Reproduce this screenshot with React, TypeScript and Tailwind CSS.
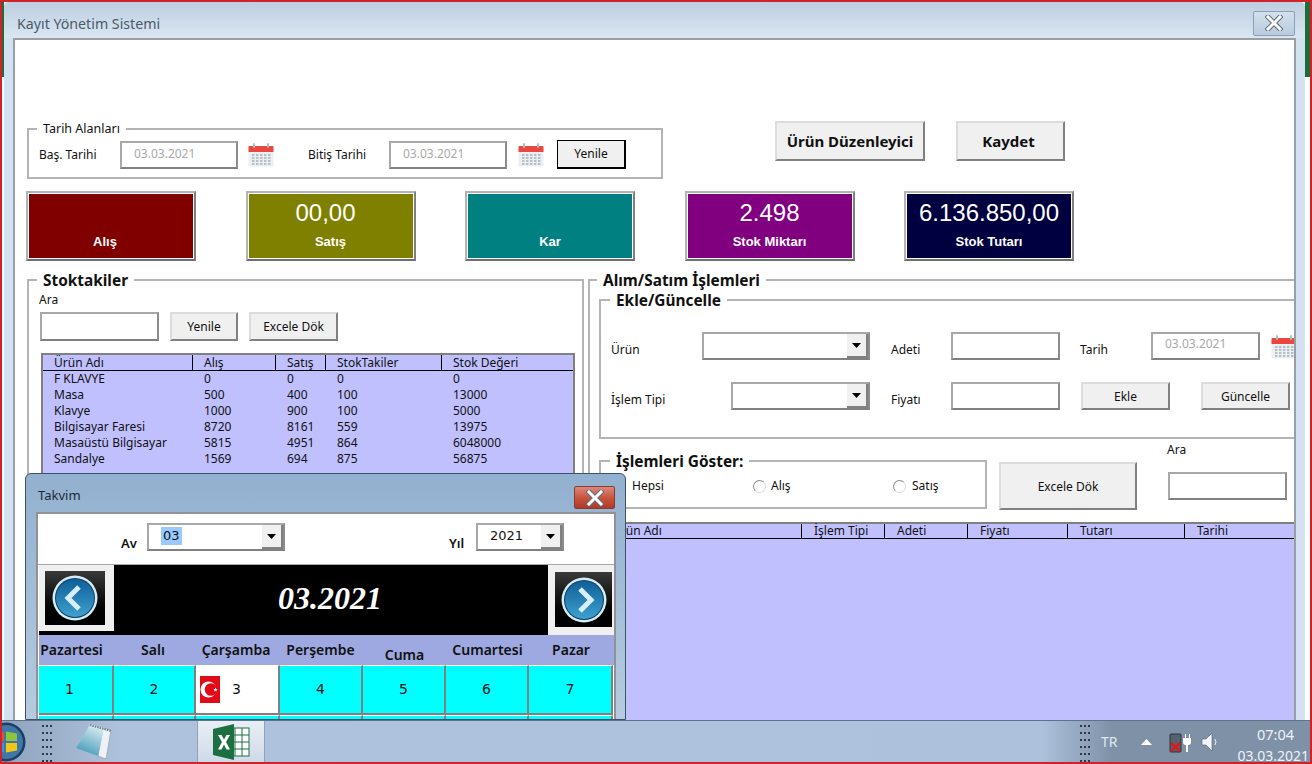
const stockRows = [
  ["F KLAVYE", "0", "0", "0", "0"],
  ["Masa", "500", "400", "100", "13000"],
  ["Klavye", "1000", "900", "100", "5000"],
  ["Bilgisayar Faresi", "8720", "8161", "559", "13975"],
  ["Masaüstü Bilgisayar", "5815", "4951", "864", "6048000"],
  ["Sandalye", "1569", "694", "875", "56875"],
];

const tiles = [
  { label: "Alış", value: "", bg: "bg-[#800000]", labelCls: "pr-[12px]", valueCls: "" },
  { label: "Satış", value: "00,00", bg: "bg-[#808000]", labelCls: "", valueCls: "pr-[10px]" },
  { label: "Kar", value: "", bg: "bg-[#008080]", labelCls: "", valueCls: "" },
  { label: "Stok Miktarı", value: "2.498", bg: "bg-[#800080]", labelCls: "", valueCls: "" },
  { label: "Stok Tutarı", value: "6.136.850,00", bg: "bg-[#000040]", labelCls: "", valueCls: "" },
];

const days = [
  { name: "Pazartesi", cls: "pt-[4px] pr-[10px]" },
  { name: "Salı", cls: "pt-[4px] pr-[4px]" },
  { name: "Çarşamba", cls: "pt-[4px] pr-[4px]" },
  { name: "Perşembe", cls: "pt-[4px] pr-[2px]" },
  { name: "Cuma", cls: "pt-[9px]" },
  { name: "Cumartesi", cls: "pt-[4px]" },
  { name: "Pazar", cls: "pt-[4px]" },
];

const raisedBtn =
  "bg-[#f0f0f0] border-2 border-t-[#dcdcdc] border-l-[#dcdcdc] border-r-[#808080] border-b-[#808080] text-[12px] text-[#111]";
const sunken =
  "bg-white border-2 border-t-[#a8a8a8] border-l-[#a8a8a8] border-r-[#8c8c8c] border-b-[#808080]";
const groupLine = "border-2 border-[#b4b4b4]";
const groupTitle = "px-[6px] translate-y-[1px] text-[15.4px] leading-[18px] font-bold";

const CalendarIcon = ({ className }: { className: string }) => (
  <svg viewBox="0 0 26 25" className={className}>
    <rect x="0.5" y="4" width="25" height="20.5" rx="1" fill="#eceff1" />
    <path d="M0.5 10V5a1 1 0 0 1 1-1h23a1 1 0 0 1 1 1v5z" fill="#e8483f" />
    <rect x="5" y="1" width="2" height="5" rx="1" fill="#b0bec5" />
    <rect x="19" y="1" width="2" height="5" rx="1" fill="#b0bec5" />
    {[12, 15, 18, 21].map((y) =>
      [4, 8, 12, 16, 20].map((x) => (
        <rect key={`${x}-${y}`} x={x} y={y} width="2.4" height="2" fill="#b6bfc6" />
      )),
    )}
  </svg>
);

const ComboBox = ({ className, children }: { className: string; children?: React.ReactNode }) => (
  <div className={`flex h-[28px] ${sunken} ${className}`}>
    <div className="flex-1 min-w-0 overflow-hidden">{children}</div>
    <div className="w-[21px] h-[24px] flex items-center justify-center bg-[#f0f0f0] border-r-2 border-b-2 border-[#808080]">
      <svg viewBox="0 0 9 5" className="w-[9px] h-[5px]">
        <path d="M0 0h9L4.5 5z" fill="#000" />
      </svg>
    </div>
  </div>
);

const Radio = () => (
  <span className="block w-[13px] h-[13px] rounded-full bg-white border border-[#8b8b8b] border-r-[#d8d8d8] border-b-[#d8d8d8]" />
);

const NavButton = ({ left, className }: { left: boolean; className: string }) => (
  <div className={`flex items-center justify-center bg-gradient-to-b from-[#3a3a3a] to-[#000] ${className}`}>
    <svg viewBox="0 0 46 46" className="w-[46px] h-[46px]">
      <defs>
        <linearGradient id={left ? "navL" : "navR"} x1="0" y1="0" x2="0" y2="1">
          <stop offset="0" stopColor="#0f5f96" />
          <stop offset="1" stopColor="#3fa0d0" />
        </linearGradient>
      </defs>
      <circle cx="23" cy="23" r="22.500" fill="#d6ecf4" />
      <circle cx="23" cy="23" r="20" fill="#0d3f66" />
      <circle cx="23" cy="23" r="19" fill={`url(#${left ? "navL" : "navR"})`} />
      <path d={left ? "M27 12L16 23l11 11" : "M19 12l11 11-11 11"} fill="none" stroke="#d8eef8" strokeWidth="5" />
    </svg>
  </div>
);

const Grip = () => (
  <svg viewBox="0 0 10 42" className="w-[10px] h-[42px]">
    {[4, 11, 18, 25, 32, 39].map((y) =>
      [0, 4, 8].map((x) => <rect key={`${x}-${y}`} x={x} y={y} width="2" height="2" fill="#2c3a4a" />),
    )}
  </svg>
);

const CloseX = ({ className }: { className: string }) => (
  <svg viewBox="0 0 18 16" className={className}>
    <path d="M3 2l12 12M15 2L3 14" stroke="#5f6f80" strokeWidth="5" strokeLinecap="square" />
    <path d="M3 2l12 12M15 2L3 14" stroke="#fff" strokeWidth="3" strokeLinecap="square" />
  </svg>
);

const Takvim = () => (
  <div className="absolute left-[23px] top-[471px] w-[601px] h-[247px] overflow-hidden rounded-t-[6px] border border-[#3c5266] bg-gradient-to-b from-[#92b0cf] to-[#b6cbdf] px-[10px]">
    <div className="flex items-center h-[38px] pl-[2px] justify-between">
      <span className="text-[13px] text-[#1c2a38] mt-[5px]">Takvim</span>
      <div className="w-[41px] h-[23px] mt-[9px] flex items-center justify-center rounded-[2px] border border-[#8a3a30] bg-gradient-to-b from-[#d9897c] via-[#c8553f] to-[#b03a2a]">
        <CloseX className="w-[18px] h-[16px]" />
      </div>
    </div>
    <div className="w-[580px] bg-white border-2 border-[#8f9398] border-b-0">
      <div className="flex h-[51px] pt-[9px] border-b border-[#a8a8a8]">
        <span className="ml-[83px] mt-[11px] w-[26px] text-[13px] font-semibold">Av</span>
        <ComboBox className="w-[138px]">
          <span className="ml-[12px] mt-[2px] inline-block bg-[#99c9ff] px-[2px] text-[13px] leading-[18px] font-['DejaVu_Sans',sans-serif]">03</span>
        </ComboBox>
        <span className="ml-[164px] mt-[11px] w-[27px] text-[13px] font-semibold">Yıl</span>
        <ComboBox className="w-[88px]">
          <span className="ml-[12px] mt-[2px] inline-block text-[13px] leading-[18px] font-['DejaVu_Sans',sans-serif]">2021</span>
        </ComboBox>
      </div>
      <div className="pl-[1px]">
        <div className="flex h-[70px] bg-black">
          <div className="w-[75px] h-[66px] bg-[#f0f0f0] pl-[6px] pt-[6px]">
            <NavButton left className="w-[60px] h-[54px]" />
          </div>
          <div className="flex-1 flex items-center justify-center pr-[2px] pb-[5px] text-white text-[32px] font-bold italic font-['Liberation_Serif',serif]">
            03.2021
          </div>
          <div className="w-[66px] h-[70px] bg-[#f0f0f0] pl-[7px] pt-[7px]">
            <NavButton left={false} className="w-[57px] h-[55px]" />
          </div>
        </div>
        <div className="grid grid-cols-[75px_82px_84px_83px_83px_83px_84px] h-[30px] bg-[#9da9e0] text-[14px] font-semibold text-[#111] text-center">
          {days.map((d) => (
            <span key={d.name} className={`whitespace-nowrap ${d.cls}`}>
              {d.name}
            </span>
          ))}
        </div>
        <div className="grid grid-cols-[75px_82px_84px_83px_83px_83px_84px] text-[14px] font-['DejaVu_Sans',sans-serif]">
          {[1, 2, 3, 4, 5, 6, 7, 0, 0, 0, 0, 0, 0, 0].map((n, i) => (
            <div
              key={i}
              className={`h-[50px] flex items-center justify-center border-t border-t-white border-b-2 border-b-[#808080] border-r-2 border-r-[#808080] ${
                n === 3 ? "bg-white" : "bg-[#00ffff]"
              } ${n === 1 ? "pr-[12px]" : ""}`}
            >
              {n === 3 ? (
                <div className="flex items-center w-full pl-[4px] gap-[12px]">
                  <svg viewBox="0 0 20 27" className="w-[20px] h-[27px]">
                    <rect width="20" height="27" fill="#e30a17" />
                    <circle cx="8.500" cy="13.500" r="8" fill="#fff" />
                    <circle cx="11" cy="13.500" r="6.300" fill="#e30a17" />
                    <path d="M15.500 11.500l.6 1.500 1.600.1-1.200 1 .4 1.500-1.400-.8-1.400.8.4-1.500-1.200-1 1.600-.1z" fill="#fff" />
                  </svg>
                  <span>{n}</span>
                </div>
              ) : n > 0 ? (
                n
              ) : null}
            </div>
          ))}
        </div>
      </div>
    </div>
  </div>
);

const App = () => {
  return (
    <div className="relative w-[1312px] h-[764px] overflow-hidden flex flex-col border-2 border-[#d0222a] bg-white text-[12px] text-[#111] font-['Noto_Sans',sans-serif]">
      <div className="flex h-[718px] shrink-0">
        <div className="w-[2px] shrink-0">
          <div className="h-[75px] bg-[#1f6b3a]" />
        </div>

        {/* main form window */}
        <div className="w-[1301px] shrink-0 flex flex-col px-[9px] rounded-t-[5px] bg-[#d3e2f0]">
          <div className="flex h-[36px] shrink-0 items-center justify-between -mx-[9px] pl-[13px] pr-[10px] rounded-t-[5px] bg-gradient-to-b from-[#bdcee0] to-[#dae6f2]">
            <span className="text-[14.200px] text-[#4a5a68] mt-[8px]">Kayıt Yönetim Sistemi</span>
            <div className="w-[42px] h-[25px] mt-[6px] flex items-center justify-center rounded-[2px] border border-[#8aa0b8] bg-gradient-to-b from-[#d4e0ec] to-[#b8cbdd]">
              <CloseX className="w-[18px] h-[16px]" />
            </div>
          </div>

          <div className="flex-1 bg-white border-2 border-[#9a9fa6] border-b-0 overflow-hidden pl-[12px] pt-[81px]">
            {/* date range and top buttons */}
            <div className="flex items-start">
              <fieldset className={`w-[636px] h-[58px] shrink-0 ${groupLine}`}>
                <legend className="ml-[8px] px-[6px] text-[12.500px] leading-[16px]">Tarih Alanları</legend>
                <div className="flex items-center h-[29px] mt-[3px] pl-[10px]">
                  <span className="w-[81px]">Baş. Tarihi</span>
                  <div className={`w-[118px] h-[28px] pl-[12px] leading-[22px] text-[#a9a9a9] ${sunken}`}>03.03.2021</div>
                  <CalendarIcon className="w-[26px] h-[25px] ml-[10px]" />
                  <span className="ml-[34px] w-[81px]">Bitiş Tarihi</span>
                  <div className={`w-[118px] h-[28px] pl-[12px] leading-[22px] text-[#a9a9a9] ${sunken}`}>03.03.2021</div>
                  <CalendarIcon className="w-[26px] h-[25px] ml-[11px]" />
                  <button className="ml-[13px] w-[69px] h-[29px] bg-[#f0f0f0] border border-r-2 border-b-2 border-black">Yenile</button>
                </div>
              </fieldset>
              <button className={`ml-[112px] w-[150px] h-[40px] !text-[15px] font-bold ${raisedBtn}`}>Ürün Düzenleyici</button>
              <button className={`ml-[31px] w-[109px] h-[40px] pr-[4px] !text-[15px] font-bold ${raisedBtn}`}>Kaydet</button>
            </div>

            {/* total tiles */}
            <div className="flex gap-[49.500px] mt-[12px] -ml-[1px]">
              {tiles.map((t) => (
                <div
                  key={t.label}
                  className={`w-[170px] h-[70px] flex flex-col items-center text-white font-['Liberation_Sans',sans-serif] border-2 border-[#b4b4b4] border-b-[#707070] border-r-[#808080] shadow-[inset_0_0_0_1px_#fff] ${t.bg}`}
                >
                  <div className={`h-[38px] pt-[2px] text-[24px] leading-[36px] whitespace-nowrap ${t.valueCls}`}>{t.value}</div>
                  <div className={`text-[13px] font-bold leading-[18px] pt-[2px] ${t.labelCls}`}>{t.label}</div>
                </div>
              ))}
            </div>

            <div className="flex gap-[4px] mt-[10px]">
              {/* stock list */}
              <fieldset className={`w-[557px] h-[460px] shrink-0 ${groupLine}`}>
                <legend className={`ml-[8px] ${groupTitle}`}>Stoktakiler</legend>
                <div className="pl-[10px] pt-[3px] leading-[16px]">Ara</div>
                <div className="flex gap-[11px] ml-[11px] mt-[4px]">
                  <div className={`w-[119px] h-[29px] ${sunken}`} />
                  <button className={`w-[68px] h-[29px] ${raisedBtn}`}>Yenile</button>
                  <button className={`w-[89px] h-[29px] ${raisedBtn}`}>Excele Dök</button>
                </div>
                <div className="w-[534px] h-[200px] ml-[12px] mt-[12px] bg-[#c0c0ff] border-2 border-[#808080] border-b-0">
                  <div className="grid grid-cols-[150px_83px_50px_116px_1fr] h-[16px] leading-[16px] border-b border-black">
                    {["Ürün Adı", "Alış", "Satış", "StokTakiler", "Stok Değeri"].map((h, i) => (
                      <span key={h} className={`pl-[11px] ${i < 4 ? "border-r border-black" : ""}`}>{h}</span>
                    ))}
                  </div>
                  {stockRows.map((r) => (
                    <div key={r[0]} className="grid grid-cols-[150px_83px_50px_116px_1fr] leading-[16px]">
                      {r.map((c, i) => (
                        <span key={i} className="pl-[11px] whitespace-nowrap">{c}</span>
                      ))}
                    </div>
                  ))}
                </div>
              </fieldset>

              {/* purchase and sale */}
              <fieldset className={`w-[730px] h-[460px] shrink-0 ${groupLine} border-r-0`}>
                <legend className={`ml-[7px] ${groupTitle}`}>Alım/Satım İşlemleri</legend>
                <fieldset className={`ml-[9px] mt-[2px] w-[720px] h-[148px] ${groupLine}`}>
                  <legend className={`ml-[9px] ${groupTitle}`}>Ekle/Güncelle</legend>
                  <div className="flex items-center mt-[23px] pl-[10px] h-[28px]">
                    <span className="w-[91px] mt-[8px]">Ürün</span>
                    <ComboBox className="w-[168px]" />
                    <span className="ml-[21px] w-[60px] mt-[8px]">Adeti</span>
                    <div className={`w-[109px] h-[28px] ${sunken}`} />
                    <span className="ml-[20px] w-[71px] mt-[8px]">Tarih</span>
                    <div className={`w-[109px] h-[28px] pl-[12px] leading-[20px] text-[#a9a9a9] ${sunken}`}>03.03.2021</div>
                    <CalendarIcon className="w-[26px] h-[25px] ml-[11px]" />
                  </div>
                  <div className="flex items-center mt-[22px] pl-[10px] h-[28px]">
                    <span className="w-[120px] mt-[8px]">İşlem Tipi</span>
                    <ComboBox className="w-[139px]" />
                    <span className="ml-[21px] w-[60px] mt-[8px]">Fiyatı</span>
                    <div className={`w-[109px] h-[28px] ${sunken}`} />
                    <button className={`ml-[21px] w-[89px] h-[28px] pt-[2px] ${raisedBtn}`}>Ekle</button>
                    <button className={`ml-[31px] w-[89px] h-[28px] pt-[2px] ${raisedBtn}`}>Güncelle</button>
                  </div>
                </fieldset>

                <div className="flex items-start ml-[9px] mt-[13px]">
                  <fieldset className={`w-[388px] h-[57px] shrink-0 ${groupLine}`}>
                    <legend className={`ml-[9px] ${groupTitle}`}>İşlemleri Göster:</legend>
                    <div className="flex items-center h-[16px] mt-[8px] pl-[12px]">
                      <Radio />
                      <span className="ml-[6px] w-[121px]">Hepsi</span>
                      <Radio />
                      <span className="ml-[5px] w-[122px]">Alış</span>
                      <Radio />
                      <span className="ml-[6px]">Satış</span>
                    </div>
                  </fieldset>
                  <button className={`ml-[12px] mt-[10px] w-[138px] h-[48px] pt-[2px] ${raisedBtn}`}>Excele Dök</button>
                  <div className="ml-[30px] -mt-[10px]">
                    <div className="leading-[16px]">Ara</div>
                    <div className={`ml-[1px] mt-[14px] w-[119px] h-[28px] ${sunken}`} />
                  </div>
                </div>

                <div className="ml-[10px] mt-[12px] w-[720px] h-[220px] bg-[#c0c0ff] border-t-2 border-[#808080]">
                  <div className="grid grid-cols-[202px_83px_83px_100px_117px_1fr] h-[15px] leading-[14px] border-b border-black">
                    {["Ürün Adı", "İşlem Tipi", "Adeti", "Fiyatı", "Tutarı", "Tarihi"].map((h, i) => (
                      <span key={h} className={`pl-[12px] ${i < 5 ? "border-r border-black" : ""}`}>{h}</span>
                    ))}
                  </div>
                </div>
              </fieldset>
            </div>
          </div>
        </div>

        <div className="w-[5px] shrink-0">
          <div className="h-[75px] bg-[#1f6b3a]" />
        </div>
      </div>

      <Takvim />

      {/* windows taskbar */}
      <div className="relative flex items-center h-[42px] shrink-0 overflow-hidden border-t border-[#5f7388] bg-[linear-gradient(90deg,#8fa3bb_0,#aec2de_120px,#adc1dc_1040px,#7f91a7_1110px,#7f91a7_100%)] text-[#eef3f8]">
        <svg viewBox="0 0 40 40" className="w-[40px] h-[40px] -ml-[16px] shrink-0">
          <circle cx="20" cy="20" r="19.500" fill="#1b3f63" />
          <circle cx="20" cy="20" r="17" fill="#3f78a8" />
          <path d="M8 12l10-2v9H8z" fill="#e8542f" />
          <path d="M20 9.500l11 2V19H20z" fill="#8cc63f" />
          <path d="M8 21h10v9l-10-2z" fill="#2e9be0" />
          <path d="M20 21h11v7.500l-11 2z" fill="#f5c518" />
        </svg>
        <div className="ml-[16px] shrink-0"><Grip /></div>
        <svg viewBox="0 0 36 36" className="w-[36px] h-[36px] ml-[24px] shrink-0">
          <defs>
            <linearGradient id="padBody" x1="0.6" y1="0" x2="0.2" y2="1">
              <stop offset="0" stopColor="#d8ecf1" />
              <stop offset="1" stopColor="#3b95b5" />
            </linearGradient>
          </defs>
          <path d="M27 4l8 2-5 29-8-3z" fill="#eef2f4" stroke="#8b98a2" strokeWidth="0.600" />
          <path d="M14 0l14 4-6 28L0 24q7-10 14-24z" fill="url(#padBody)" />
          <path d="M14 1l21 6" stroke="#6d7a84" strokeWidth="2" strokeDasharray="1.500 1" />
        </svg>
        <div className="ml-[85px] w-[68px] h-[42px] shrink-0 flex items-center justify-center bg-gradient-to-b from-[#e8eef5] to-[#cfdae8] border-x border-[#8ea2b8]">
          <svg viewBox="0 0 37 36" className="w-[37px] h-[36px]">
            <rect x="16" y="4" width="20" height="28" fill="#fff" stroke="#1d6f42" />
            <path d="M22 4v28M29 4v28M16 11h20M16 18h20M16 25h20" stroke="#1d6f42" strokeWidth="1" />
            <path d="M0 5l21-5v36L0 31z" fill="#1d6f42" />
            <path d="M5 11h3.500l2.500 4.500L13.500 11H17l-4 7 4 7.500h-3.500L11 20.500 8.500 25.500H5l4-7.500z" fill="#fff" />
          </svg>
        </div>
        <div className="ml-[815px] shrink-0"><Grip /></div>
        <span className="ml-[11px] w-[30px] text-[14px] text-[#dfe7ef] shrink-0">TR</span>
        <svg viewBox="0 0 11 6" className="w-[11px] h-[6px] ml-[10px] shrink-0">
          <path d="M0 6l5.500-6L11 6z" fill="#fff" />
        </svg>
        <svg viewBox="0 0 22 22" className="w-[22px] h-[22px] ml-[17px] shrink-0">
          <rect x="1" y="3" width="11" height="18" rx="1" fill="#56626e" stroke="#2a323a" />
          <path d="M2 12l9 8M11 12l-9 8" stroke="#e01818" strokeWidth="2.500" />
          <path d="M14 7v4a3 3 0 0 0 3 3v7h2v-7a3 3 0 0 0 3-3V7h-1V3h-1v4h-3V3h-1v4z" fill="#fff" />
        </svg>
        <svg viewBox="0 0 18 20" className="w-[18px] h-[20px] ml-[10px] shrink-0">
          <path d="M1 7h4l6-6v18l-6-6H1z" fill="#f2f5f8" stroke="#55606c" strokeWidth="0.600" />
          <path d="M14 7q2 3 0 6" fill="none" stroke="#eef2f6" />
        </svg>
        <div className="ml-auto self-start mt-[3px] shrink-0 leading-[20px] text-right whitespace-nowrap">
          <div className="pr-[16px] text-[14.500px]">07:04</div>
          <div className="mt-[2px] pr-[1px] text-[14px]">03.03.2021</div>
        </div>
      </div>
    </div>
  );
};

export default App;
